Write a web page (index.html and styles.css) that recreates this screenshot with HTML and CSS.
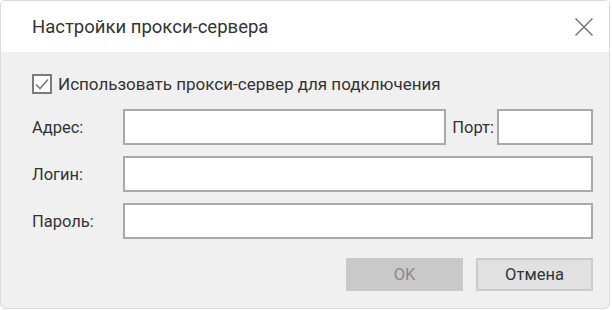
FILE: index.html
```html
<html>

<head>
    <meta charset="utf-8" />
    <link rel="stylesheet" href="styles.css">
</head>

<body>
    <div class="dialog">
        <div class="header">
            <span class="title">Настройки прокси-сервера</span>
            <svg class="close" width="20" height="20" viewBox="0 0 20 20">
                <path d="M1.5 1.5 L18.5 18.5 M18.5 1.5 L1.5 18.5" stroke="#7b7b7b" stroke-width="1.6" fill="none" />
            </svg>
        </div>

        <div class="content">
            <label class="check-row">
                <span class="checkbox">
                    <svg width="16" height="16" viewBox="0 0 16 16">
                        <path d="M2 8.5 L6 12.5 L14 3.5" stroke="#7b7b7b" stroke-width="1.6" fill="none" />
                    </svg>
                </span>
                <span>Использовать прокси-сервер для подключения</span>
            </label>

            <div class="form">
                <span class="label">Адрес:</span>
                <div class="address-row">
                    <input class="field" type="text" />
                    <span class="port-label">Порт:</span>
                    <input class="field port" type="text" />
                </div>

                <span class="label">Логин:</span>
                <input class="field" type="text" />

                <span class="label">Пароль:</span>
                <input class="field" type="password" />
            </div>

            <div class="buttons">
                <button class="btn btn-ok" disabled>OK</button>
                <button class="btn btn-cancel">Отмена</button>
            </div>
        </div>
    </div>
</body>
</html>
```

FILE: styles.css
```css
* {
    box-sizing: border-box;
}

body {
    margin: 0;
    background-color: #ffffff;
    font-family: Roboto, "Liberation Sans", sans-serif;
    color: #333333;
}

.dialog {
    width: 610px;
    height: 309px;
    border: 1px solid #dadada;
    border-radius: 5px;
    overflow: hidden;
    background-color: #f0f0f0;
    display: flex;
    flex-direction: column;
}

.header {
    height: 51px;
    background-color: #ffffff;
    display: flex;
    align-items: center;
    justify-content: space-between;
    padding: 0 15px 0 31px;
}

.title {
    font-size: 18.5px;
    color: #333333;
}

.content {
    padding: 22px 16px 0 31px;
}

.check-row {
    display: flex;
    align-items: center;
    gap: 6px;
    font-size: 17px;
    height: 20px;
}

.checkbox {
    width: 20px;
    height: 20px;
    border: 2px solid #7b7b7b;
    background-color: #ffffff;
    display: flex;
    align-items: center;
    justify-content: center;
}

.form {
    display: grid;
    grid-template-columns: 91px 1fr;
    row-gap: 11px;
    align-items: center;
    margin-top: 15px;
    font-size: 16.5px;
}

.address-row {
    display: flex;
    align-items: center;
}

.field {
    height: 36px;
    width: 100%;
    border: 2px solid #a9a9a9;
    background-color: #ffffff;
    outline: none;
    padding: 0 6px;
    font-family: inherit;
    font-size: 16px;
}

.address-row .field {
    flex: 1;
}

.port-label {
    margin: 0 3px 0 6px;
}

.address-row .port {
    flex: none;
    width: 96px;
}

.buttons {
    display: flex;
    justify-content: flex-end;
    gap: 13px;
    margin-top: 19px;
}

.btn {
    width: 117px;
    height: 33px;
    font-family: inherit;
    font-size: 16.5px;
    border: 2px solid #cbcbcb;
    padding: 0;
}

.btn-ok {
    background-color: #c9c9c9;
    border-color: #c9c9c9;
    color: #8a8a8a;
}

.btn-cancel {
    background-color: #e1e1e1;
    color: #333333;
}
```
